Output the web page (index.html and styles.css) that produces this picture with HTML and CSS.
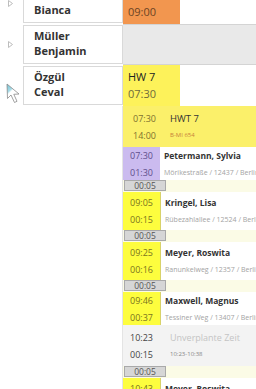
FILE: index.html
```html
<!DOCTYPE html>
<html>

<head>
    <title>Tourenplan</title>
    <meta name="viewport" content="width=device-width, initial-scale=1" charset="UTF-8">
    <link rel="stylesheet" href="styles.css">
</head>

<body>
    <div class="planner">
        <!-- Mitarbeiterzeilen -->
        <div class="rows">
            <div class="row">
                <div class="toggle">
                    <svg class="tri" width="5" height="7" viewBox="0 0 5 7"><path d="M0.5 0.5 L4.5 3.5 L0.5 6.5 Z" fill="none" stroke="#bdbdbd" stroke-width="1"/></svg>
                </div>
                <div class="person"><span>Bianca</span></div>
                <div class="lane">
                    <div class="block orange"><span class="btime">09:00</span></div>
                </div>
            </div>
            <div class="row">
                <div class="toggle">
                    <svg class="tri" width="5" height="7" viewBox="0 0 5 7"><path d="M0.5 0.5 L4.5 3.5 L0.5 6.5 Z" fill="none" stroke="#bdbdbd" stroke-width="1"/></svg>
                </div>
                <div class="person"><span>Müller</span><span>Benjamin</span></div>
                <div class="lane empty"></div>
            </div>
            <div class="row">
                <div class="toggle"></div>
                <div class="person"><span>Özgül</span><span>Ceval</span></div>
                <div class="lane">
                    <div class="block yellow"><span class="blabel">HW 7</span><span class="btime">07:30</span></div>
                </div>
            </div>
        </div>

        <!-- aufgeklappte Tour -->
        <div class="tour">
            <div class="item hwt">
                <div class="time"><span>07:30</span><span>14:00</span></div>
                <div class="info"><span class="title">HWT 7</span><span class="plate">B-MI 654</span></div>
            </div>

            <div class="item stop short">
                <div class="time purple"><span>07:30</span><span>01:30</span></div>
                <div class="info"><span class="name">Petermann, Sylvia</span><span class="addr">Mörikestraße / 12437 / Berlin</span></div>
            </div>
            <div class="gap"><span class="gaptime">00:05</span></div>

            <div class="item stop">
                <div class="time yel"><span>09:05</span><span>00:15</span></div>
                <div class="info"><span class="name">Kringel, Lisa</span><span class="addr">Rübezahlallee / 12524 / Berlin</span></div>
            </div>
            <div class="gap"><span class="gaptime">00:05</span></div>

            <div class="item stop">
                <div class="time yel"><span>09:25</span><span>00:16</span></div>
                <div class="info"><span class="name">Meyer, Roswita</span><span class="addr">Ranunkelweg / 12357 / Berlin</span></div>
            </div>
            <div class="gap"><span class="gaptime">00:05</span></div>

            <div class="item stop short">
                <div class="time yel"><span>09:46</span><span>00:37</span></div>
                <div class="info"><span class="name">Maxwell, Magnus</span><span class="addr">Tessiner Weg / 13407 / Berlin</span></div>
            </div>

            <div class="item free">
                <div class="time"><span>10:23</span><span>00:15</span></div>
                <div class="info"><span class="ftitle">Unverplante Zeit</span><span class="frange">10:23-10:38</span></div>
            </div>
            <div class="gap"><span class="gaptime">00:05</span></div>

            <div class="item stop">
                <div class="time yel"><span>10:43</span><span>00:16</span></div>
                <div class="info"><span class="name">Meyer, Roswita</span><span class="addr">Ranunkelweg / 12357 / Berlin</span></div>
            </div>
        </div>

        <!-- Mauszeiger -->
        <svg class="cursor" width="18" height="21" viewBox="0 0 18 21">
            <defs>
                <linearGradient id="cur" x1="0" y1="0" x2="0.6" y2="1">
                    <stop offset="0" stop-color="#72c2d6"/>
                    <stop offset="0.35" stop-color="#a6dbe7"/>
                    <stop offset="0.45" stop-color="#ffffff"/>
                </linearGradient>
            </defs>
            <path d="M1 1 L1.5 15.5 L5 12 L8.5 19.5 L11 18.3 L7.8 11.3 L13 11 Z" fill="url(#cur)" stroke="#8a8a8a" stroke-width="0.8"/>
        </svg>
    </div>
</body>

</html>
```

FILE: styles.css
```css
body {
    margin: 0;
    background-color: #ffffff;
    font-family: "Open Sans", "Noto Sans", sans-serif;
    color: #333333;
}

.planner {
    position: relative;
    width: 256px;
    height: 389px;
    overflow: hidden;
}

.rows {
    margin-top: -17px;
}

.row {
    display: flex;
    height: 41px;
}

.toggle {
    width: 23px;
    display: flex;
    align-items: center;
    padding-left: 8px;
    box-sizing: border-box;
}

.person {
    width: 100px;
    height: 39px;
    margin: 1px 0;
    box-sizing: border-box;
    border: 1px solid #d9d9d9;
    padding: 0 0 5px 10px;
    display: flex;
    flex-direction: column;
    justify-content: flex-end;
    font-size: 11px;
    font-weight: 700;
    line-height: 15px;
    color: #333333;
}

.lane {
    flex: 1;
    white-space: nowrap;
}

.lane.empty {
    background-color: #e9e9e9;
    border-top: 1px solid #d4d4d4;
    border-bottom: 1px solid #d4d4d4;
}

.block {
    width: 57px;
    height: 100%;
    box-sizing: border-box;
    padding: 0 0 4px 5px;
    display: flex;
    flex-direction: column;
    justify-content: flex-end;
    font-size: 11px;
    line-height: 17px;
}

.block.orange {
    background-color: #f2964f;
}

.block.yellow {
    background-color: #fdf25a;
}

.blabel {
    color: #222222;
}

.btime {
    color: #6e6a3c;
}

.block.orange .btime {
    color: #6b4424;
}

.tour {
    margin-left: 122px;
    border-left: 1px solid #e4e4e4;
    white-space: nowrap;
}

.item {
    display: flex;
    box-sizing: border-box;
}

.time {
    width: 37px;
    flex-shrink: 0;
    display: flex;
    flex-direction: column;
    align-items: center;
    justify-content: center;
    gap: 6px;
    font-size: 9px;
    line-height: 11px;
}

.info {
    display: flex;
    flex-direction: column;
    justify-content: center;
    gap: 6px;
    padding-left: 4px;
    line-height: 11px;
}

.hwt {
    height: 41px;
    background-color: #fbf06a;
}

.hwt .time {
    width: 43px;
    color: #7d7230;
}

.hwt .info {
    padding-left: 4px;
}

.title {
    font-size: 9.5px;
    color: #333333;
}

.plate {
    font-size: 6px;
    color: #c8803a;
}

.stop {
    height: 38px;
    background-color: #ffffff;
}

.stop.short {
    height: 33px;
}

.time.purple {
    background-color: #cbbbef;
    color: #5e4f8c;
}

.time.yel {
    background-color: #fdfd3e;
    color: #7a7420;
    border-right: 1px solid #d8d26a;
}

.name {
    font-size: 8.5px;
    font-weight: 700;
    color: #333333;
}

.addr {
    font-size: 7px;
    color: #a3a3a3;
}

.gap {
    height: 12px;
    background-color: #fbfbe6;
    padding: 0 0 0 1px;
}

.gaptime {
    display: block;
    width: 42px;
    height: 11px;
    box-sizing: border-box;
    background-color: #d6d6d6;
    border: 1px solid #a9a9a9;
    font-size: 8.5px;
    line-height: 9px;
    color: #555555;
    text-align: center;
}

.free {
    height: 41px;
    background-color: #f3f3f3;
}

.free .time {
    color: #444444;
}

.free .info {
    padding-left: 10px;
}

.ftitle {
    font-size: 9px;
    color: #c4c4c4;
}

.frange {
    font-size: 6px;
    color: #888888;
}

.cursor {
    position: absolute;
    left: 6px;
    top: 83px;
}
```
